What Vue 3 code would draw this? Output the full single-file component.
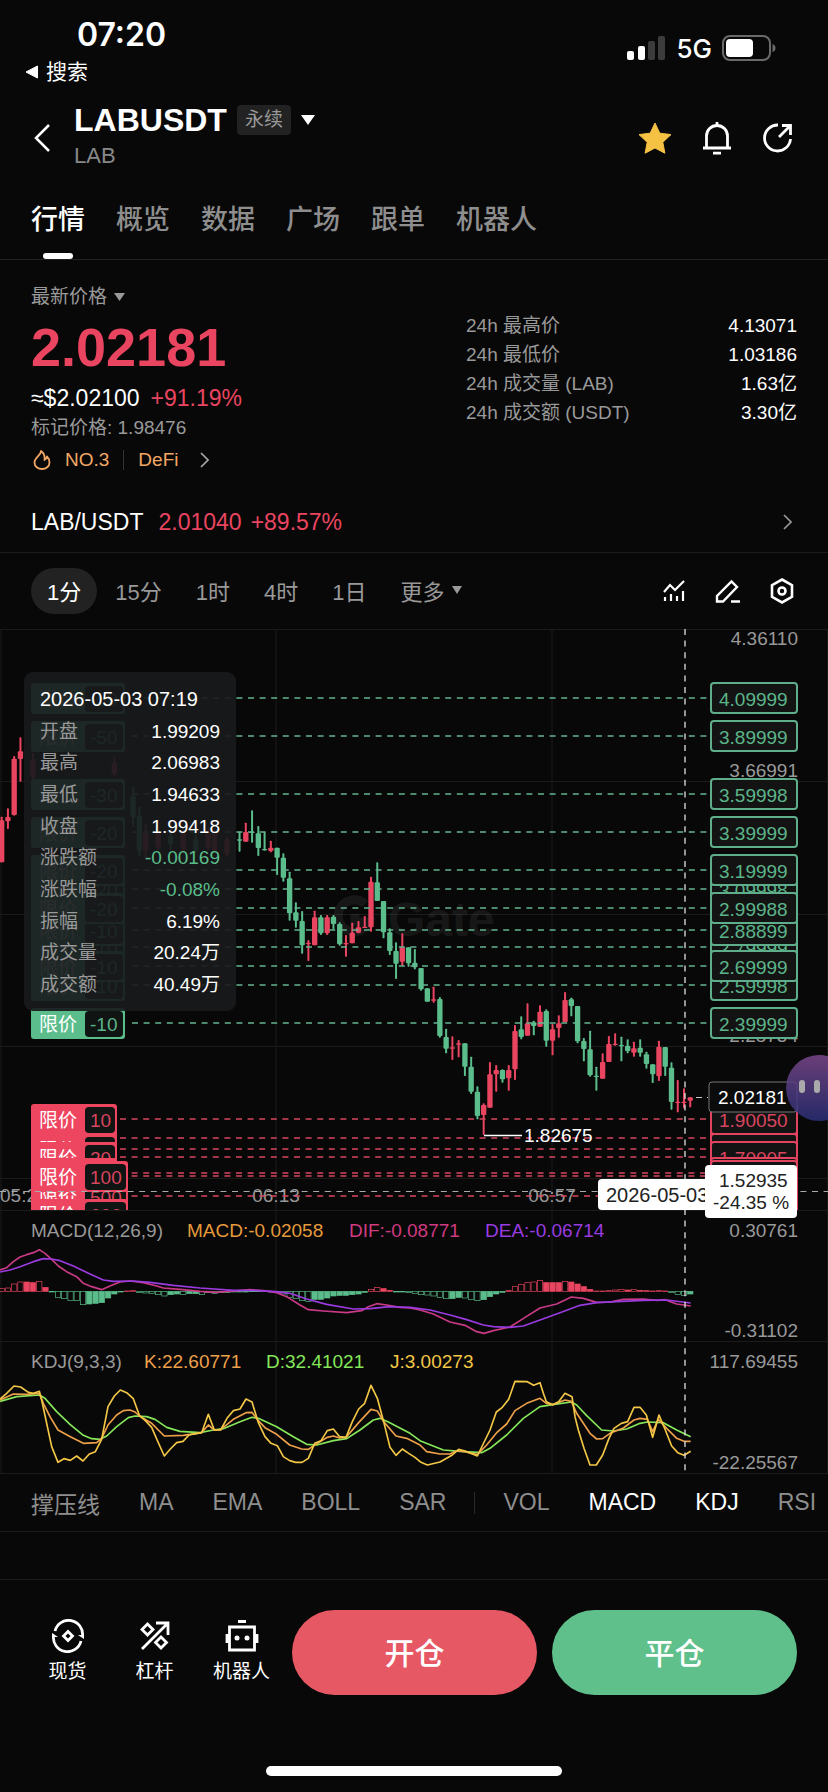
<template>
  <div class="app">
    <!-- Status bar -->
    <div class="status">
      <div class="status-left">
        <span class="clock">07:20</span>
        <a href="#" class="back-app">
          <svg width="14" height="14" viewBox="0 0 14 14"><path d="M12.5 1v12L1 7z" fill="#fff" stroke="#fff" stroke-linejoin="round" /></svg>
          搜索
        </a>
      </div>
      <div class="status-right">
        <svg width="39" height="25" viewBox="0 0 39 25">
          <rect x="0" y="15" width="7" height="9" rx="2" fill="#fff" />
          <rect x="11" y="10" width="7" height="14" rx="2" fill="#fff" />
          <rect x="21" y="5" width="7" height="19" rx="2" fill="#3c3c3c" />
          <rect x="31" y="0" width="7" height="24" rx="2" fill="#3c3c3c" />
        </svg>
        <span class="network">5G</span>
        <svg width="54" height="26" viewBox="0 0 54 26">
          <rect x="1" y="1" width="47" height="24" rx="7" fill="none" stroke="#6a6a6a" stroke-width="2" />
          <rect x="4" y="4" width="27" height="18" rx="4" fill="#fff" />
          <path d="M50.5 9q3 1 3 4t-3 4z" fill="#6a6a6a" />
        </svg>
      </div>
    </div>

    <!-- Header -->
    <header class="header">
      <button class="icon-btn" aria-label="back">
        <svg width="18" height="30" viewBox="0 0 18 30"><path d="M16 2L3 15l13 13" fill="none" stroke="#fff" stroke-width="2.5" /></svg>
      </button>
      <div class="pair-title">
        <div class="pair-line">
          <h1>LABUSDT</h1>
          <span class="badge">永续</span>
          <svg width="14" height="10" viewBox="0 0 14 10"><path d="M0 0h14L7 10z" fill="#fff" /></svg>
        </div>
        <div class="pair-sub">LAB</div>
      </div>
      <div class="header-icons">
        <button class="icon-btn" aria-label="favorite">
          <svg width="34" height="32" viewBox="0 0 34 32"><path d="M17 1l4.8 10.2 11.2 1.4-8.2 7.7 2.1 10.9L17 26l-9.9 5.2 2.1-10.9L1 12.6l11.2-1.4z" fill="#f6c244" stroke="#f6c244" stroke-linejoin="round" /></svg>
        </button>
        <button class="icon-btn" aria-label="alerts">
          <svg width="30" height="34" viewBox="0 0 30 34" fill="none" stroke="#fff" stroke-width="2.8">
            <path d="M4.5 27V15a10.5 10.5 0 0 1 21 0v12M1 27h28M15 1v4M11 32.2h8" />
          </svg>
        </button>
        <button class="icon-btn" aria-label="share">
          <svg width="32" height="32" viewBox="0 0 32 32" fill="none" stroke="#fff" stroke-width="2.8">
            <path d="M16 3A13 13 0 1 0 28.5 17M17 15L28 4M20 3.5h8.5V13" />
          </svg>
        </button>
      </div>
    </header>

    <!-- Page tabs -->
    <nav class="tabs">
      <button v-for="(tab, i) in tabs" :key="tab" :class="{ active: i === activeTab }" @click="activeTab = i">{{ tab }}</button>
    </nav>

    <!-- Price summary -->
    <section class="summary">
      <div class="quote">
        <button class="price-kind">
          最新价格
          <svg width="11" height="8" viewBox="0 0 11 8"><path d="M0 0h11L5.5 8z" fill="#999" /></svg>
        </button>
        <div class="last-price">2.02181</div>
        <div class="fiat"><span>≈$2.02100</span><span class="up">+91.19%</span></div>
        <div class="mark">标记价格: 1.98476</div>
        <div class="labels">
          <svg width="18" height="20" viewBox="0 0 18 20" fill="none" stroke="#f3a765" stroke-width="1.8" stroke-linejoin="round">
            <path d="M8 1c.5 4-6.5 6.5-6.5 11.5C1.5 16.5 5 19 9 19s7.5-2.5 7.5-6.5c0-3-1.5-5-2.5-6-.3 2-1 3-2.5 3.5C12 6 11 3 8 1z" />
          </svg>
          <a href="#">NO.3</a>
          <i></i>
          <a href="#">DeFi</a>
          <svg width="9" height="16" viewBox="0 0 9 16"><path d="M1 1l7 7-7 7" fill="none" stroke="#aaa" stroke-width="1.6" /></svg>
        </div>
      </div>
      <dl class="stats">
        <div v-for="s in stats" :key="s[0]">
          <dt>{{ s[0] }}</dt>
          <dd>{{ s[1] }}</dd>
        </div>
      </dl>
    </section>

    <a href="#" class="spot">
      <span class="spot-name">LAB/USDT</span>
      <span class="up">2.01040</span>
      <span class="up">+89.57%</span>
      <svg width="9" height="16" viewBox="0 0 9 16"><path d="M1 1l7 7-7 7" fill="none" stroke="#999" stroke-width="1.6" /></svg>
    </a>

    <!-- Intervals -->
    <div class="intervals">
      <button v-for="(t, i) in intervals" :key="t" :class="{ active: i === activeInterval }" @click="activeInterval = i">{{ t }}</button>
      <button>
        更多
        <svg width="10" height="8" viewBox="0 0 10 8"><path d="M0 0h10L5 8z" fill="#999" /></svg>
      </button>
      <div class="tools">
        <button class="icon-btn" aria-label="indicators">
          <svg width="24" height="24" viewBox="0 0 24 24" fill="none" stroke="#fff" stroke-width="2.2">
            <path d="M2 13l6-7 5 5 9-9M3 18v4M9 15v7M15 17v5M21 12v10" />
          </svg>
        </button>
        <button class="icon-btn" aria-label="draw">
          <svg width="26" height="26" viewBox="0 0 26 26" fill="none" stroke="#fff" stroke-width="2.4">
            <path d="M2 23.5v-5.5L16.5 3.5l5.5 5.5L8 23.5zM16 23.5h9" />
          </svg>
        </button>
        <button class="icon-btn" aria-label="settings">
          <svg width="24" height="26" viewBox="0 0 24 26" fill="none" stroke="#fff" stroke-width="2.6">
            <path d="M12 1.5l10 5.7v11.6l-10 5.7-10-5.7V7.2z" />
            <circle cx="12" cy="13" r="3.5" />
          </svg>
        </button>
      </div>
    </div>

    <!-- Chart -->
    <section class="chart">
      <svg class="plot" viewBox="0 0 828 845">
        <defs>
          <clipPath id="main-pane"><rect x="0" y="0" width="828" height="581" /></clipPath>
        </defs>

        <path class="grid" d="M0 .5h828M0 152.5h828M0 285.5h828M0 417.5h828M0 549.5h828M0 581.5h828M0 712.5h828M0 844.5h828M1 0v844M276 0v844M552 0v844M827.5 0v844" />

        <g class="watermark">
          <path d="M365 275a16 16 0 1 0 4 18h-14v-8" />
          <text x="388" y="307">Gate</text>
        </g>

        <text v-for="a in axis" :key="a.t" class="axis" x="798" :y="a.y" text-anchor="end">{{ a.t }}</text>
        <text class="axis" x="0" y="573">05:29</text>
        <text class="axis" x="276" y="573" text-anchor="middle">06:13</text>
        <text class="axis" x="552" y="573" text-anchor="middle">06:57</text>

        <!-- Candles -->
        <svg y="0" width="828" height="581" viewBox="0 27 2484 1743">
          <g v-for="(c, i) in candles" :key="i" :fill="c.color">
            <rect :x="c.x - 3" :y="c.high" width="6" :height="c.low - c.high" rx="2" />
            <rect :x="c.x - 8" :y="c.top - 2" width="16" :height="c.bottom - c.top + 4" rx="3" />
          </g>
        </svg>

        <!-- Open orders -->
        <g clip-path="url(#main-pane)">
          <path v-for="o in orders" :key="'l' + o.price" class="order-line" :class="o.side" :d="`M${o.side === 'buy' ? 120 : 132} ${o.y}H707`" />
          <g v-for="o in orders" :key="o.price" :class="o.side" :transform="`translate(0 ${o.y})`">
            <rect class="tag" x="31" y="-15" :width="o.w" height="31" rx="3" />
            <rect class="tag-qty" x="85" y="-12" :width="o.w - 56" height="26" rx="4" />
            <text class="tag-text" x="39" y="8">限价</text>
            <text class="order-text" x="90" y="8">{{ o.qty }}</text>
            <rect class="price-box" x="711" y="-15" width="86" height="30" rx="3" />
            <text class="order-text" x="719" y="8">{{ o.price }}</text>
          </g>
        </g>

        <!-- Lowest price -->
        <path d="M484 506.5h38" stroke="#fff" stroke-width="1.5" />
        <text x="524" y="513" class="low">1.82675</text>

        <!-- Sub indicators -->
        <svg y="581" width="828" height="263" viewBox="0 30 2484 789" class="lines">
          <rect v-for="(b, i) in bars" :key="i" :x="b.x" :y="b.y" width="16" :height="b.h" :stroke="b.color" :fill="b.fill ? b.color : 'none'" stroke-width="2" />
          <polyline stroke="#c93a86" :points="dif" />
          <polyline stroke="#9a3be0" :points="dea" />
          <polyline stroke="#86e65a" :points="lineD" />
          <polyline stroke="#eda04a" :points="lineK" />
          <polyline stroke="#f3c746" :points="lineJ" />
        </svg>

        <g class="legend">
          <text x="31" y="608" fill="#999">MACD(12,26,9)</text>
          <text x="187" y="608" fill="#e59a3c">MACD:-0.02058</text>
          <text x="349" y="608" fill="#cf3a80">DIF:-0.08771</text>
          <text x="485" y="608" fill="#9a3be0">DEA:-0.06714</text>
          <text x="31" y="739" fill="#999">KDJ(9,3,3)</text>
          <text x="144" y="739" fill="#eda04a">K:22.60771</text>
          <text x="266" y="739" fill="#86e65a">D:32.41021</text>
          <text x="390" y="739" fill="#f3c746">J:3.00273</text>
        </g>

        <!-- Crosshair -->
        <path class="cross" d="M685 0v844" />
        <path class="cross dim" d="M0 562.5h828" />
        <path d="M696 468.5h12" stroke="#ccc" stroke-dasharray="6 5" />
        <rect x="709" y="453" width="88" height="30" rx="3" fill="#0b0b0b" stroke="#777" />
        <text x="718" y="475" class="low">2.02181</text>
        <rect x="598" y="550" width="172" height="31" rx="4" fill="#fff" />
        <text x="606" y="573" class="cross-text wide">2026-05-03 07:19</text>
        <rect x="705" y="536" width="92" height="53" rx="4" fill="#fff" />
        <text x="719" y="558" class="cross-text">1.52935</text>
        <text x="713" y="580" class="cross-text">-24.35 %</text>
      </svg>

      <!-- Candle detail -->
      <div class="tooltip">
        <div class="tip-time">2026-05-03 07:19</div>
        <div v-for="r in detail" :key="r[0]" class="tip-row">
          <span>{{ r[0] }}</span>
          <b :class="{ down: r[1].startsWith('-') }">{{ r[1] }}</b>
        </div>
      </div>

      <button class="bubble" aria-label="assistant"><i></i><i></i></button>
    </section>

    <!-- Indicator picker -->
    <div class="indicators">
      <button v-for="n in overlays" :key="n">{{ n }}</button>
      <i></i>
      <button v-for="n in oscillators" :key="n" :class="{ active: shown.includes(n) }">{{ n }}</button>
    </div>

    <!-- Footer -->
    <footer class="footer">
      <div class="footer-row">
        <nav class="shortcuts">
          <a href="#">
            <svg width="34" height="34" viewBox="0 0 34 34" fill="none" stroke="#fff" stroke-width="2.8">
              <path d="M4 12a14 14 0 0 1 27.5 5M30 22A14 14 0 0 1 2.5 17M17 12.5l4.5 4.5-4.5 4.5-4.5-4.5z" />
              <path d="M27 16h6v4zM7 18H1v-4z" fill="#fff" stroke="none" />
            </svg>
            现货
          </a>
          <a href="#">
            <svg width="34" height="34" viewBox="0 0 34 34" fill="none" stroke="#fff" stroke-width="2.8">
              <path d="M4 30L29 5M18 4h12v12M9.5 5l5.5 5.5-5.5 5.5L4 10.5zM23 18l5.5 5.5L23 29l-5.5-5.5z" />
            </svg>
            杠杆
          </a>
          <a href="#">
            <svg width="34" height="34" viewBox="0 0 34 34" fill="none" stroke="#fff" stroke-width="2.8">
              <path d="M4.5 8h25v23h-25zM13 2.5h8M2 15v9M32 15v9" />
              <g fill="#fff" stroke="none"><circle cx="12" cy="19" r="2.5" /><circle cx="22" cy="19" r="2.5" /></g>
            </svg>
            机器人
          </a>
        </nav>
        <button class="trade open">开仓</button>
        <button class="trade close">平仓</button>
      </div>
      <div class="home-bar"></div>
    </footer>
  </div>
</template>

<script setup>
import { ref } from 'vue'

const RED = '#ea4560'
const GREEN = '#5bbd8b'

const tabs = ['行情', '概览', '数据', '广场', '跟单', '机器人']
const activeTab = ref(0)

const stats = [
  ['24h 最高价', '4.13071'],
  ['24h 最低价', '1.03186'],
  ['24h 成交量 (LAB)', '1.63亿'],
  ['24h 成交额 (USDT)', '3.30亿']
]

const intervals = ['1分', '15分', '1时', '4时', '1日']
const activeInterval = ref(0)

const overlays = ['撑压线', 'MA', 'EMA', 'BOLL', 'SAR']
const oscillators = ['VOL', 'MACD', 'KDJ', 'RSI']
const shown = ['MACD', 'KDJ']

const detail = [
  ['开盘', '1.99209'],
  ['最高', '2.06983'],
  ['最低', '1.94633'],
  ['收盘', '1.99418'],
  ['涨跌额', '-0.00169'],
  ['涨跌幅', '-0.08%'],
  ['振幅', '6.19%'],
  ['成交量', '20.24万'],
  ['成交额', '40.49万']
]

const axis = [
  { t: '4.36110', y: 16 },
  { t: '3.66991', y: 148 },
  { t: '2.97872', y: 280 },
  { t: '2.28754', y: 413 },
  { t: '0.30761', y: 608 },
  { t: '-0.31102', y: 708 },
  { t: '117.69455', y: 739 },
  { t: '-22.25567', y: 840 }
]

// price -> y inside the main pane
const priceY = (p) => Math.round(69 + (4.1 - p) * 191.3)

// in paint order, later ones lie on top
const orders = [
  ['4.09999', -50],
  ['3.89999', -50],
  ['3.59998', -30],
  ['3.39999', -20],
  ['3.09998', -20],
  ['3.19999', -20],
  ['2.79999', -10],
  ['2.88899', -10],
  ['2.99988', -20],
  ['2.59998', -10],
  ['2.69999', -10],
  ['2.39999', -10],
  ['1.80005', 10],
  ['1.74010', 20],
  ['1.90050', 10],
  ['1.70005', 20],
  ['1.61800', 50],
  ['1.49850', 500],
  ['1.60200', 100],
  ['1.40400', 600]
].map(([price, qty]) => ({
  price,
  qty,
  y: priceY(Number(price)),
  side: qty > 0 ? 'buy' : 'sell',
  w: qty >= 100 ? 97 : qty > 0 ? 86 : 94
}))

const STEP = 18.78
const slotX = (i) => 5 + i * STEP

// [slot, up?, high, body top, body bottom, low]
const candles = [
  [0, 1, 590, 603, 725, 727], [1, 1, 565, 593, 602, 627], [2, 1, 408, 418, 583, 587], [3, 1, 352, 396, 415, 485],
  [5, 1, 400, 420, 470, 490], [18, 1, 410, 430, 460, 470], [21, 0, 500, 530, 590, 620], [22, 0, 560, 590, 690, 710],
  [23, 1, 610, 640, 690, 720], [25, 1, 600, 640, 680, 690], [27, 0, 610, 650, 670, 690], [29, 1, 620, 640, 690, 700],
  [31, 0, 640, 660, 690, 700], [33, 1, 620, 640, 680, 690], [34, 1, 630, 640, 690, 700], [36, 1, 650, 660, 700, 710],
  [38, 0, 635, 660, 660, 695], [39, 1, 608, 638, 663, 665], [40, 0, 571, 637, 637, 668], [41, 0, 618, 642, 682, 708],
  [42, 0, 636, 689, 689, 692], [43, 1, 662, 685, 691, 697], [44, 0, 683, 685, 711, 765], [45, 0, 700, 715, 771, 785],
  [46, 0, 755, 777, 878, 902], [47, 0, 847, 879, 900, 923], [48, 0, 873, 905, 974, 1001], [49, 1, 960, 970, 970, 1023],
  [50, 1, 872, 894, 974, 976], [51, 0, 885, 894, 938, 945], [52, 1, 885, 894, 938, 945], [53, 0, 885, 892, 910, 928],
  [54, 0, 907, 914, 971, 977], [55, 1, 945, 971, 971, 1010], [56, 1, 908, 940, 968, 970], [57, 1, 903, 924, 936, 940],
  [58, 1, 888, 922, 922, 923], [59, 1, 770, 787, 920, 935], [60, 0, 727, 789, 841, 843], [61, 0, 843, 845, 935, 955],
  [62, 0, 925, 939, 991, 1005], [63, 0, 967, 995, 1029, 1077], [64, 1, 940, 984, 1023, 1038], [65, 0, 982, 984, 1028, 1040],
  [66, 0, 987, 1030, 1040, 1048], [67, 0, 1045, 1046, 1106, 1112], [68, 0, 1105, 1107, 1143, 1145], [69, 1, 1100, 1140, 1140, 1148],
  [70, 0, 1131, 1139, 1246, 1253], [71, 0, 1226, 1253, 1284, 1300], [72, 1, 1249, 1284, 1284, 1320], [73, 1, 1260, 1272, 1272, 1312],
  [74, 0, 1270, 1272, 1338, 1368], [75, 0, 1310, 1342, 1413, 1422], [76, 0, 1399, 1417, 1486, 1498], [77, 1, 1450, 1457, 1483, 1545],
  [78, 1, 1326, 1365, 1461, 1463], [79, 1, 1335, 1352, 1361, 1415], [80, 0, 1348, 1352, 1376, 1388], [81, 1, 1335, 1352, 1373, 1412],
  [82, 1, 1215, 1235, 1346, 1380], [83, 0, 1189, 1230, 1249, 1258], [84, 1, 1150, 1212, 1245, 1247], [85, 0, 1202, 1209, 1216, 1246],
  [86, 1, 1156, 1177, 1218, 1220], [87, 0, 1168, 1175, 1260, 1280], [88, 1, 1212, 1230, 1260, 1306], [89, 1, 1186, 1212, 1222, 1253],
  [90, 1, 1116, 1142, 1204, 1206], [91, 0, 1133, 1140, 1156, 1189], [92, 0, 1158, 1160, 1262, 1270], [93, 0, 1254, 1265, 1285, 1324],
  [94, 0, 1232, 1290, 1364, 1370], [95, 0, 1340, 1369, 1369, 1412], [96, 1, 1300, 1328, 1374, 1376], [97, 1, 1248, 1274, 1324, 1326],
  [98, 1, 1240, 1273, 1273, 1277], [99, 0, 1250, 1277, 1277, 1324], [100, 0, 1258, 1279, 1291, 1300], [101, 1, 1265, 1287, 1296, 1310],
  [102, 0, 1258, 1285, 1296, 1310], [103, 0, 1295, 1305, 1330, 1346], [104, 0, 1333, 1335, 1361, 1389], [105, 1, 1262, 1282, 1367, 1383],
  [106, 0, 1281, 1283, 1338, 1368], [107, 0, 1327, 1345, 1444, 1469], [108, 1, 1380, 1447, 1447, 1477], [109, 1, 1405, 1447, 1447, 1465],
  [110, 1, 1432, 1434, 1440, 1462]
].map(([i, up, high, top, bottom, low]) => ({ x: slotX(i), color: up ? RED : GREEN, high, top, bottom, low }))

// MACD histogram: hollow while growing, solid while shrinking
const histogram = [
  8, 10, 22, 28, 28, 26, 30, 12, -2, -18, -22, -27, -28, -40, -38, -36, -34, -20, -8, -2,
  1, 2, -4, -5, -6, -10, -14, -10, -8, -9, -7, -7, -10, -4, -6, -4, -3, -2, -2, -2,
  -1, -1, -1, -2, -3, -8, -18, -22, -28, -30, -24, -24, -20, -14, -12, -12, -10, -8, -3, 6,
  12, 8, 3, -2, -2, -4, -6, -10, -11, -14, -18, -22, -22, -18, -20, -24, -28, -25, -16, -8,
  -3, 2, 14, 20, 26, 28, 33, 26, 26, 26, 30, 28, 22, 14, 6, 1, 1, 2, 4, 6,
  4, 6, 3, 2, 1, 2, 1, -4, -9, -12, -8
]

const bars = histogram.map((v, i) => ({
  x: slotX(i) - 8,
  y: v > 0 ? 274 - v : 274,
  h: Math.abs(v),
  color: v > 0 ? RED : GREEN,
  fill: i > 0 && Math.abs(v) <= Math.abs(histogram[i - 1])
}))

const dif = '0,210 20,203 40,185 60,171 80,164 100,158 118,149 135,160 155,178 175,198 200,215 230,230 250,250 275,260 305,269 330,258 360,246 390,243 430,248 470,258 490,264 540,268 600,274 650,277 700,273 750,269 790,272 830,278 860,290 900,315 925,329 970,333 1040,338 1085,332 1105,320 1130,311 1160,315 1200,322 1230,324 1260,330 1300,342 1350,366 1395,376 1430,395 1452,400 1480,392 1530,381 1580,349 1620,324 1670,312 1714,291 1750,295 1790,307 1830,306 1870,298 1930,297 1970,301 1995,299 2030,312 2072,318'
const dea = '0,216 30,210 60,200 100,185 130,176 155,177 180,182 220,198 270,222 310,240 340,244 400,243 450,247 520,256 600,264 700,271 760,271 830,275 870,280 920,297 980,313 1060,327 1110,326 1170,320 1230,322 1290,330 1350,345 1400,359 1450,375 1480,380 1530,382 1570,378 1620,360 1680,338 1740,316 1790,308 1850,305 1930,301 2000,300 2072,309'
const lineJ = '0,597 20,580 42,558 62,561 85,577 100,580 118,574 125,600 155,740 174,787 192,776 211,781 230,768 249,783 268,762 286,755 305,718 324,620 343,588 361,570 380,578 400,596 418,646 436,662 455,682 474,726 493,768 511,747 530,728 549,724 567,705 605,698 625,643 643,690 662,690 681,655 700,632 720,627 738,597 756,606 775,668 795,710 813,730 832,737 850,770 869,782 887,787 906,787 925,775 944,730 963,722 982,692 1000,687 1019,710 1038,712 1057,665 1076,627 1094,610 1113,556 1132,595 1151,665 1170,742 1188,766 1207,747 1226,760 1245,772 1263,787 1282,795 1320,786 1357,765 1376,748 1395,753 1432,768 1470,690 1489,636 1507,622 1526,598 1545,544 1582,545 1601,556 1620,548 1630,580 1639,605 1658,614 1676,605 1695,580 1716,590 1725,650 1735,690 1752,745 1770,795 1789,795 1808,765 1827,715 1842,685 1864,670 1883,665 1902,622 1920,622 1939,645 1958,712 1977,645 1996,690 2015,738 2033,758 2052,766 2072,754'
const lineK = '0,600 40,582 80,583 118,580 130,610 150,650 174,690 211,710 250,730 290,728 305,715 324,675 350,645 370,632 390,630 405,636 418,648 455,670 493,708 550,706 605,698 625,675 643,690 662,689 700,658 738,638 756,637 775,662 795,683 830,703 869,735 905,747 925,748 944,735 982,712 1000,708 1019,714 1038,712 1076,668 1113,628 1132,633 1151,665 1188,708 1220,715 1260,735 1280,755 1320,762 1350,762 1370,752 1395,755 1432,764 1460,735 1490,698 1520,672 1545,632 1580,610 1620,595 1639,610 1658,614 1695,600 1714,604 1730,640 1770,700 1790,717 1808,716 1830,700 1870,684 1902,660 1920,655 1942,658 1958,695 1975,658 2000,685 2030,715 2052,724 2072,724'
const lineD = '0,604 50,590 118,585 135,595 170,635 210,673 250,706 275,716 300,718 320,708 350,680 385,653 405,648 440,650 465,658 500,682 540,694 600,698 640,690 670,686 720,665 756,652 775,655 830,680 880,710 920,733 950,735 1000,722 1040,716 1080,690 1120,660 1140,655 1165,666 1230,700 1260,722 1330,750 1380,754 1445,758 1470,745 1520,705 1570,655 1620,620 1658,614 1714,606 1730,615 1760,647 1805,690 1840,693 1880,687 1920,670 1942,666 1990,668 2030,690 2072,710'
</script>

<style>
body {
  background: #080808;
}
</style>

<style scoped>
.app {
  font-family: "Liberation Sans", "Noto Sans CJK SC", sans-serif;
  font-size: 19px;
  color: #fff;
  background: #080808;
}

.app *,
.app {
  box-sizing: border-box;
}

button {
  padding: 0;
  border: none;
  background: none;
  color: inherit;
  font: inherit;
  white-space: nowrap;
  cursor: pointer;
}

a {
  color: inherit;
  text-decoration: none;
}

svg {
  display: block;
  flex: none;
}

.icon-btn {
  display: flex;
}

.up {
  color: #ea4560;
}

/* Status bar */
.status {
  display: flex;
  justify-content: space-between;
  height: 88px;
  padding: 16px 52px 0 25px;
}

.clock {
  display: block;
  padding-left: 52px;
  font-family: Inter, sans-serif;
  font-size: 32px;
  font-weight: 600;
  line-height: 38px;
}

.back-app {
  display: flex;
  align-items: center;
  gap: 7px;
  font-size: 21px;
  line-height: 36px;
}

.status-right {
  display: flex;
  align-items: center;
  gap: 10px;
  height: 64px;
}

.network {
  font-family: Inter, sans-serif;
  font-size: 26px;
  font-weight: 500;
}

/* Header */
.header {
  display: flex;
  align-items: center;
  height: 94px;
  padding: 6px 34px 0 33px;
}

.pair-title {
  margin-left: 23px;
}

.pair-line {
  display: flex;
  align-items: center;
  gap: 10px;
  height: 36px;
}

h1 {
  margin: 0;
  font-size: 32px;
  line-height: 36px;
}

.badge {
  padding: 0 8px;
  border-radius: 4px;
  background: #222;
  color: #999;
  line-height: 30px;
}

.pair-sub {
  color: #888;
  font-size: 22px;
  line-height: 36px;
}

.header-icons {
  display: flex;
  align-items: center;
  gap: 30px;
  margin-left: auto;
}

/* Tabs */
.tabs {
  display: flex;
  gap: 31px;
  height: 78px;
  padding: 0 31px;
  border-bottom: 1px solid #222;
}

.tabs button {
  position: relative;
  padding-bottom: 6px;
  color: #8e8e8e;
  font-size: 27px;
  font-weight: 500;
}

.tabs .active {
  color: #fff;
}

.tabs .active::after {
  content: "";
  position: absolute;
  bottom: 0;
  left: 12px;
  width: 30px;
  height: 6px;
  border-radius: 3px;
  background: #fff;
}

/* Summary */
.summary {
  display: flex;
  justify-content: space-between;
  padding: 23px 31px 15px;
}

.price-kind {
  display: flex;
  align-items: center;
  gap: 7px;
  color: #999;
  line-height: 28px;
}

.last-price {
  color: #ea4560;
  font-size: 54px;
  font-weight: 700;
  line-height: 72px;
}

.fiat {
  display: flex;
  gap: 11px;
  font-size: 23px;
  line-height: 30px;
}

.mark {
  color: #999;
  line-height: 30px;
}

.labels {
  display: flex;
  align-items: center;
  gap: 14px;
  height: 34px;
  padding-left: 2px;
  color: #f3a765;
}

.labels i {
  width: 1px;
  height: 20px;
  background: #333;
}

.labels svg:last-child {
  margin-left: 8px;
}

.stats {
  width: 331px;
  margin: 28px 0 0;
}

.stats div {
  display: flex;
  justify-content: space-between;
  line-height: 29px;
}

.stats dt {
  color: #999;
}

.stats dd {
  margin: 0;
}

.spot {
  display: flex;
  align-items: center;
  gap: 9px;
  height: 61px;
  padding: 0 36px 0 31px;
  border-bottom: 1px solid #1c1c1c;
  font-size: 23px;
}

.spot-name {
  margin-right: 6px;
}

.spot svg {
  margin-left: auto;
}

/* Intervals */
.intervals {
  display: flex;
  align-items: center;
  gap: 2px;
  height: 76px;
  padding: 0 34px 0 31px;
  color: #999;
  font-size: 22px;
}

.intervals > button {
  display: flex;
  align-items: center;
  gap: 7px;
  height: 46px;
  padding: 0 16px 3px;
  border-radius: 23px;
}

.intervals > .active {
  background: #222;
  color: #fff;
}

.tools {
  display: flex;
  align-items: center;
  gap: 29px;
  margin-left: auto;
}

/* Chart */
.chart {
  position: relative;
  overflow: hidden;
}

.plot {
  width: 100%;
  height: auto;
  font-size: 19px;
}

.grid {
  fill: none;
  stroke: #1b1b1b;
}

.watermark {
  opacity: 0.06;
  fill: #fff;
  font-size: 48px;
  font-weight: 700;
}

.watermark path {
  fill: none;
  stroke: #fff;
  stroke-width: 9;
}

.axis {
  fill: #999;
}

.low {
  fill: #fff;
}

.order-line {
  stroke-width: 1.5;
  stroke-dasharray: 6 5.6;
}

.order-line.sell {
  stroke: #63b48e;
}

.order-line.buy {
  stroke: #d8455f;
}

.tag-text {
  fill: #fff;
}

.tag-qty {
  fill: #101412;
}

.price-box {
  fill: #141313;
  stroke-width: 2;
}

.sell .tag {
  fill: #5bbd8b;
}

.sell .order-text {
  fill: #5bb58a;
}

.sell .price-box {
  stroke: #5fae8b;
}

.buy .tag {
  fill: #ee4561;
}

.buy .order-text {
  fill: #d8455f;
}

.buy .price-box {
  stroke: #e24460;
}

.lines polyline {
  fill: none;
  stroke-width: 5;
  stroke-linejoin: round;
}

.cross {
  fill: none;
  stroke: #e0e0e0;
  stroke-width: 1.3;
  stroke-dasharray: 6 5.6;
}

.cross.dim {
  stroke: #aaa;
  stroke-width: 1;
}

.cross-text {
  fill: #222;
}

.cross-text.wide {
  font-size: 20px;
}

.tooltip {
  position: absolute;
  top: 43px;
  left: 24px;
  display: flex;
  flex-direction: column;
  justify-content: space-between;
  width: 212px;
  height: 339px;
  padding: 12px 16px 11px;
  border-radius: 9px;
  background: rgba(24, 26, 28, 0.92);
  line-height: 31px;
}

.tip-time {
  font-size: 20px;
  white-space: nowrap;
}

.tip-row {
  display: flex;
  justify-content: space-between;
  height: 31px;
}

.tip-row span {
  color: #999;
}

.tip-row b {
  font-weight: 400;
}

.tip-row .down {
  color: #5bbd8b;
}

.bubble {
  position: absolute;
  top: 426px;
  right: -24px;
  display: flex;
  justify-content: center;
  gap: 9px;
  width: 66px;
  height: 66px;
  padding: 25px 20px 0 0;
  border-radius: 33px;
  background: linear-gradient(rgba(124, 72, 140, 0.85), rgba(42, 48, 120, 0.85));
}

.bubble i {
  width: 6px;
  height: 13px;
  border-radius: 3px;
  background: #aaa;
}

/* Indicator picker */
.indicators {
  display: flex;
  align-items: center;
  gap: 39px;
  height: 58px;
  padding-left: 31px;
  border-bottom: 1px solid #1c1c1c;
  overflow: hidden;
  color: #8e8e8e;
  font-size: 23px;
}

.indicators .active {
  color: #fff;
}

.indicators i {
  flex: none;
  width: 1px;
  height: 22px;
  margin: 0 -11px;
  background: #2a2a2a;
}

/* Footer */
.footer {
  margin-top: 47px;
  padding: 30px 31px 15px;
  border-top: 1px solid #1c1c1c;
}

.footer-row {
  display: flex;
  gap: 15px;
}

.shortcuts {
  display: flex;
  width: 261px;
  margin: 0 -8px 0 -7px;
}

.shortcuts a {
  display: flex;
  flex: 1;
  flex-direction: column;
  align-items: center;
  gap: 5px;
  padding-top: 9px;
  line-height: 28px;
}

.trade {
  flex: 1;
  height: 85px;
  padding-bottom: 4px;
  border-radius: 43px;
  font-size: 30px;
  font-weight: 500;
}

.trade.open {
  background: #e65864;
}

.trade.close {
  background: #5fc08b;
}

.home-bar {
  width: 296px;
  height: 10px;
  margin: 71px auto 0;
  border-radius: 5px;
  background: #fff;
}
</style>
